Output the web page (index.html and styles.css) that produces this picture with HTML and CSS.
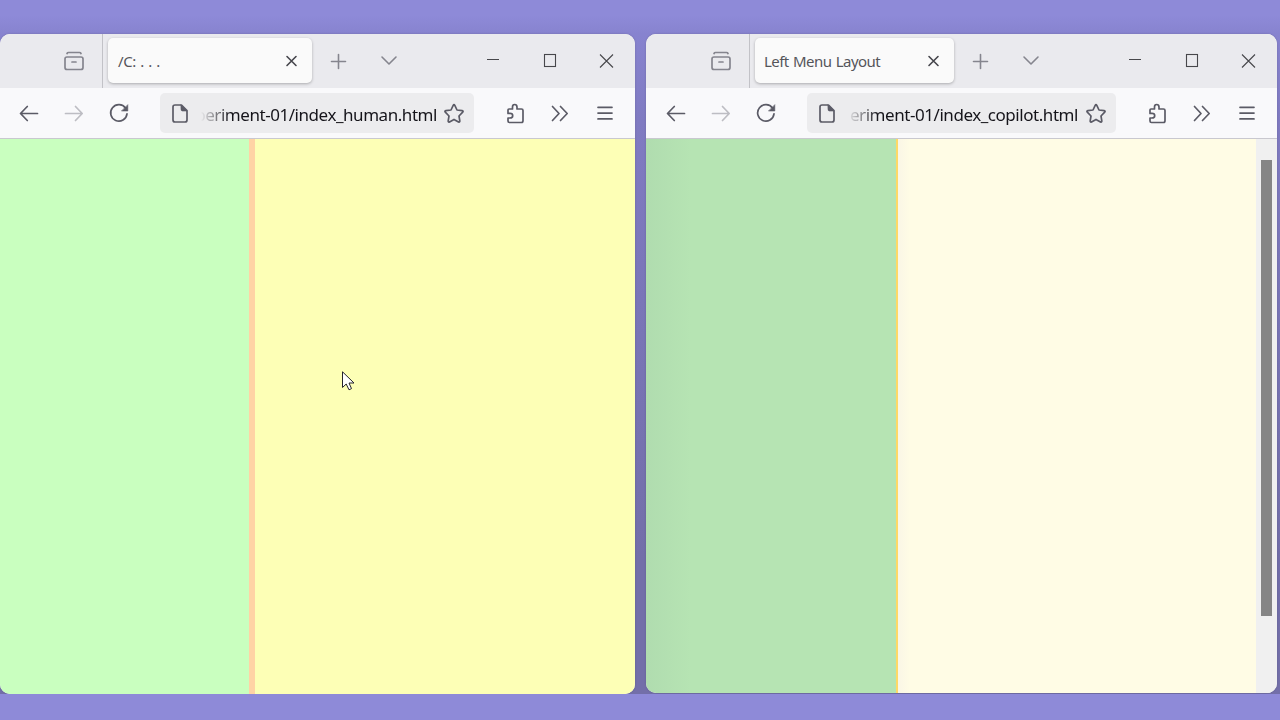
FILE: index.html
```html
<!DOCTYPE html>
<html lang="en">
<head>
<meta charset="utf-8">
<title>Left Menu Layout</title>
<link rel="stylesheet" href="styles.css">
</head>
<body>
<svg class="sprite" aria-hidden="true">
  <symbol id="archive" viewBox="0 0 24 24"><rect x="3" y="8" width="18" height="12.500" rx="2"/><path d="M5 4.500Q5.500 3.500 6.500 3.500H17.500Q18.500 3.500 19 4.500M10 13H14"/></symbol>
  <symbol id="tabclose" viewBox="0 0 24 24"><path d="M8 7.500L17 16.500M17 7.500L8 16.500"/></symbol>
  <symbol id="plus" viewBox="0 0 24 24"><path d="M5.500 12.500H19.500M12.500 5.500V19.500"/></symbol>
  <symbol id="down" viewBox="0 0 24 24"><path d="M5 8L12 15L19 8"/></symbol>
  <symbol id="min" viewBox="0 0 24 24"><path d="M6 10.500H18"/></symbol>
  <symbol id="max" viewBox="0 0 24 24"><rect x="6.500" y="5.500" width="11" height="12"/></symbol>
  <symbol id="close" viewBox="0 0 24 24"><path d="M6 5.500L19 18.500M19 5.500L6 18.500"/></symbol>
  <symbol id="back" viewBox="0 0 24 24"><path d="M20.500 12.500H4M10.300 5.500L3.500 12.500L10.300 19.500"/></symbol>
  <symbol id="forward" viewBox="0 0 24 24"><path d="M3.500 12.500H20M13.500 5.500L20.200 12.500L13.500 19.500"/></symbol>
  <symbol id="reload" viewBox="0 0 24 24"><path d="M18.600 7.200A8.200 8.200 0 1 0 20 12.800"/><path class="solid" d="M20.800 4V10H14.800Z"/></symbol>
  <symbol id="page" viewBox="0 0 24 24"><path d="M7 4H13.500L19 9.500V19Q19 21 17 21H7Q5 21 5 19V6Q5 4 7 4Z"/><path class="solid" d="M13 4L19 10H14.500Q13 10 13 8.500Z"/></symbol>
  <symbol id="star" viewBox="0 0 24 24"><path d="M11.200 4.300Q12 2.800 12.800 4.300L15 9L20.200 9.700Q21.700 10 20.700 11.200L17 15L17.800 19.900Q18 21.500 16.500 20.900L12 18.400L7.500 20.900Q6 21.500 6.200 19.900L7 15L3.300 11.200Q2.300 10 3.800 9.700L9 9Z"/></symbol>
  <symbol id="puzzle" viewBox="0 0 24 24"><path d="M6 8H9.500V6Q9.500 3.500 11.700 3.500T14 6V8H18.500Q20 8 20 9.500V19.500Q20 21.500 18.500 21.500H6.500Q5 21.500 5 20V17H7Q9.700 17 9.700 14.700T7 12.400H5V9Q5 8 6 8Z"/></symbol>
  <symbol id="more" viewBox="0 0 24 24"><path d="M4.500 5.500L11 12.500L4.500 19.500M12.500 5.500L19.200 12.500L12.500 19.500"/></symbol>
  <symbol id="menu" viewBox="0 0 24 24"><path d="M5 6.300H19M5 12.100H19M5 17.900H19"/></symbol>
</svg>

<main class="desktop">
  <section class="window window-human">
    <header class="tabs">
      <svg class="icon muted archive"><use href="#archive"/></svg>
      <div class="tab"><span class="title dots">/C: . . .</span><svg class="icon"><use href="#tabclose"/></svg></div>
      <svg class="icon muted plus"><use href="#plus"/></svg>
      <svg class="icon muted down"><use href="#down"/></svg>
      <div class="controls"><svg class="icon"><use href="#min"/></svg><svg class="icon"><use href="#max"/></svg><svg class="icon"><use href="#close"/></svg></div>
    </header>
    <nav class="toolbar">
      <svg class="icon"><use href="#back"/></svg>
      <svg class="icon disabled"><use href="#forward"/></svg>
      <svg class="icon"><use href="#reload"/></svg>
      <div class="address"><svg class="icon"><use href="#page"/></svg><div class="clip"><span class="url">periment-01/index_human.html</span></div><svg class="icon"><use href="#star"/></svg></div>
      <svg class="icon"><use href="#puzzle"/></svg>
      <svg class="icon"><use href="#more"/></svg>
      <svg class="icon"><use href="#menu"/></svg>
    </nav>
    <div class="page"><div class="side"></div><div class="content"></div></div>
  </section>

  <section class="window window-copilot">
    <header class="tabs">
      <svg class="icon muted archive"><use href="#archive"/></svg>
      <div class="tab"><span class="title">Left Menu Layout</span><svg class="icon"><use href="#tabclose"/></svg></div>
      <svg class="icon muted plus"><use href="#plus"/></svg>
      <svg class="icon muted down"><use href="#down"/></svg>
      <div class="controls"><svg class="icon"><use href="#min"/></svg><svg class="icon"><use href="#max"/></svg><svg class="icon"><use href="#close"/></svg></div>
    </header>
    <nav class="toolbar">
      <svg class="icon"><use href="#back"/></svg>
      <svg class="icon disabled"><use href="#forward"/></svg>
      <svg class="icon"><use href="#reload"/></svg>
      <div class="address"><svg class="icon"><use href="#page"/></svg><div class="clip"><span class="url">eriment-01/index_copilot.html</span></div><svg class="icon"><use href="#star"/></svg></div>
      <svg class="icon"><use href="#puzzle"/></svg>
      <svg class="icon"><use href="#more"/></svg>
      <svg class="icon"><use href="#menu"/></svg>
    </nav>
    <div class="page"><div class="side"></div><div class="content"></div><div class="scrollbar"><div class="thumb"></div></div></div>
  </section>

  <svg class="cursor" viewBox="0 0 13 20"><path d="M.5 .8V16.500L4.200 13L7 18.800L9.500 17.600L7 12H12Z"/></svg>
</main>
</body>
</html>
```

FILE: styles.css
```css
* { box-sizing: border-box; }
body {
  margin: 0;
  height: 720px;
  overflow: hidden;
  background: #8e8ad8;
  font-family: "Noto Sans", "Open Sans", sans-serif;
}
.sprite { position: absolute; width: 0; height: 0; }
.desktop {
  position: relative;
  height: 694px;
  overflow: hidden;
  background: linear-gradient(#8e8ad8 15px, #8783cf 34px, #807bc2 120px, #7a76b8 300px, #736fa9 560px, #736fa9);
}
.window {
  position: absolute;
  top: 34px;
  display: flex;
  flex-direction: column;
  overflow: hidden;
  border-radius: 10px;
  background: #f9f9fb;
  box-shadow: 0 0 2px #3334;
}
.window-human { left: 0; width: 635px; height: 660px; }
.window-copilot { left: 646px; width: 631px; height: 659px; }

.icon {
  display: block;
  flex: none;
  width: 24px;
  height: 24px;
  fill: none;
  stroke: #5b5b66;
  stroke-width: 1.7;
  stroke-linecap: round;
  stroke-linejoin: round;
}
.solid { fill: #5b5b66; stroke-width: .6; }
.muted { stroke: #85858e; }
.disabled { stroke: #bdbdc3; }

.tabs { display: flex; flex: none; align-items: center; height: 54px; padding: 0 17px 0 62px; background: #eaeaee; }
.window-copilot .tabs { padding-left: 63px; }
.archive { margin-right: 16px; }
.tab {
  position: relative;
  display: flex;
  align-items: center;
  justify-content: space-between;
  width: 204px;
  height: 45px;
  margin: 0 14px 1px 6px;
  padding: 0 9px 0 10px;
  border-radius: 5px;
  background: #fafafa;
  box-shadow: 0 1px 3px #0004;
}
.window-copilot .tab { width: 199px; }
.tab::before { content: ""; position: absolute; left: -6px; top: -4px; width: 1px; height: 54px; background: #c2c2c7; }
.tab .icon { stroke: #46464c; stroke-width: 1.6; }
.title { padding-top: 1px; font-size: 15px; line-height: 20px; letter-spacing: -.55px; word-spacing: 1px; white-space: nowrap; color: #55555a; }
.window-copilot .title { margin-left: -1px; }
.dots { letter-spacing: -.4px; word-spacing: .9px; }
.plus, .down { stroke-width: 1.6; }
.down { margin-left: 27px; }
.controls { display: flex; gap: 33px; margin-left: auto; }
.controls .icon:last-child { margin-left: -1px; }
.controls .icon { stroke: #47474b; stroke-width: 1.1; stroke-linecap: butt; stroke-linejoin: miter; }

.toolbar { display: flex; flex: none; align-items: center; gap: 21px; height: 51px; padding: 0 18px 0 17px; border-bottom: 1px solid #c9c8cf; }
.window-copilot .toolbar { padding-left: 18px; }
.address { display: flex; flex: 1; align-items: center; min-width: 0; height: 40px; margin: 0 8px; padding: 0 8px; border-radius: 5px; background: #ececee; }
.clip { display: flex; flex: 1; justify-content: flex-end; min-width: 0; height: 30px; margin: 0 5px 0 9px; padding-top: 2px; overflow: hidden; mask-image: linear-gradient(90deg, transparent, #000 30px); }
.window-copilot .clip { margin-right: 6px; }
.url { font-size: 17px; line-height: 30px; letter-spacing: -.45px; white-space: nowrap; color: #15141a; }

.page { display: flex; flex: 1; min-height: 0; }
.content { flex: 1; }
.window-human .side { width: 255px; border-right: 6px solid #ffd3a5; background: #c9ffbf; }
.window-human .content { background: #fdffb6; }
.window-copilot .side { width: 252px; border-right: 2px solid #ffd966; background: linear-gradient(90deg, #b0dcaf, #b6e4b3 45px); }
.window-copilot .content { background: linear-gradient(90deg, #faf6e6, #fffce5 12px); }
.scrollbar { width: 21px; padding: 21px 5px 0; background: #f0f0f0; }
.thumb { height: 456px; background: #858585; }

.cursor { position: absolute; left: 342px; top: 371px; width: 13px; height: 20px; fill: #fff; stroke: #25252b; stroke-width: 1; }
```
